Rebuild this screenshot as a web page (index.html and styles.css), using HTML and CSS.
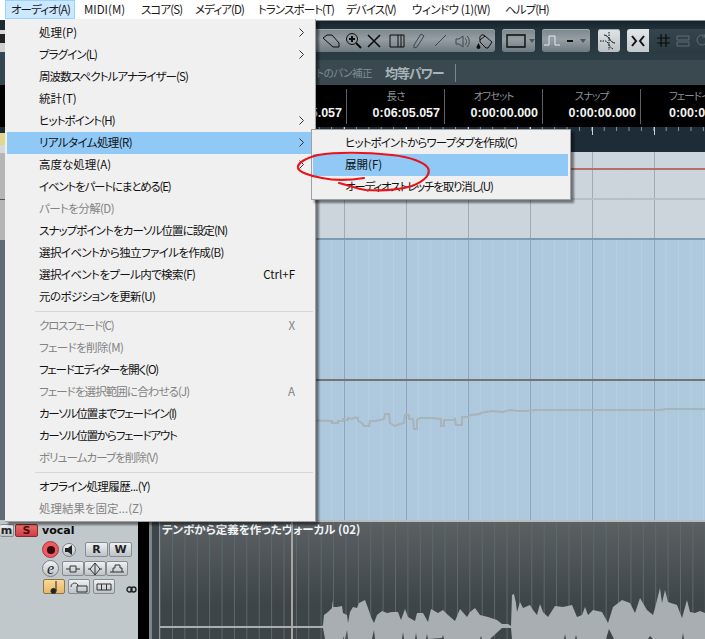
FILE: index.html
```html
<!doctype html>
<html lang="ja">
<head>
    <meta charset="UTF-8">
    <title>オーディオ メニュー</title>
    <link rel="stylesheet" href="styles.css">
</head>
<body>
<div class="app">
    <div class="menubar">
        <span class="top-item active">オーディオ(A)</span>
        <span class="top-item k">MIDI(M)</span>
        <span class="top-item">スコア(S)</span>
        <span class="top-item">メディア(D)</span>
        <span class="top-item">トランスポート(T)</span>
        <span class="top-item">デバイス(V)</span>
        <span class="top-item m">ウィンドウ (1)(W)</span>
        <span class="top-item">ヘルプ(H)</span>
    </div>

    <div class="upper">
        <!-- 左端に少しだけ見えている部分 -->
        <div class="strip">
            <div class="s1"></div>
            <div class="s2"></div>
            <div class="s3"></div>
            <div class="s4"></div>
            <div class="s5"></div>
            <div class="s6"></div>
            <div class="s7"></div>
            <div class="s8"></div>
            <div class="s9"></div>
        </div>

        <div class="main">
            <div class="toolbar">
                <div class="tool-group tools">
                    <svg class="tool" width="18" height="16" viewBox="0 0 18 16"><path d="M1 5 5 2h5l7 8v4h-6L1 5Z"/></svg>
                    <svg class="tool" width="17" height="17" viewBox="0 0 17 17"><circle cx="7" cy="7" r="5.5"/><path d="M4 7h6M7 4v6M11 11l5 5" stroke-width="2"/></svg>
                    <svg class="tool" width="14" height="14" viewBox="0 0 14 14"><path d="M1 1 13 13M13 1 1 13" stroke-width="1.6"/></svg>
                    <svg class="tool" width="16" height="14" viewBox="0 0 16 14"><path d="M1 1h14M1 13h14M1 1v12M9 1v12M12 1v12M15 1v12"/></svg>
                    <svg class="tool dim" width="12" height="17" viewBox="0 0 12 17"><path d="M1 13 8 2l3 2-7 11-3 1v-3Z"/></svg>
                    <svg class="tool dim" width="13" height="13" viewBox="0 0 13 13"><path d="M1 12 12 1"/></svg>
                    <svg class="tool dim" width="16" height="14" viewBox="0 0 16 14"><path d="M1 5h3l4-3v11L4 10H1V5ZM10 4c2 2 2 5 0 7M12 2c3 3 3 8 0 11"/></svg>
                    <svg class="tool" width="17" height="16" viewBox="0 0 17 16"><path d="M4 7 9 3l7 6-4 6H10L4 9V7ZM4 7C3 3 6 0 9 3"/><path class="ink" d="M2.500 10 4.500 14a2 2 0 1 1-4 0Z"/></svg>
                </div>
                <div class="tool-group shape">
                    <svg class="tool" width="20" height="14" viewBox="0 0 20 14"><path d="M1 1h18v12H1z" stroke-width="1.4"/></svg>
                    <span class="drop"></span>
                </div>
                <div class="tool-group pulse">
                    <svg class="tool pale" width="16" height="12" viewBox="0 0 16 12"><path d="M0 10h5V1h6v9h5"/></svg>
                    <span class="dash"></span>
                    <span class="drop"></span>
                </div>
                <div class="tool-group curve">
                    <svg class="tool" width="18" height="18" viewBox="0 0 18 18"><path d="M0 9h5c4 0 4 8 9 8M9 0v18" stroke-dasharray="1.5 1"/><path d="M4 3c5 0 6 8 11 8" /></svg>
                </div>
                <div class="tool-group snap">
                    <div class="snap-on">
                        <svg class="tool" width="14" height="14" viewBox="0 0 14 14"><path d="M1 2l4 5-4 5M13 2 9 7l4 5" stroke-width="2"/></svg>
                    </div>
                    <svg class="tool" width="13" height="13" viewBox="0 0 13 13"><path d="M4 0v13M9 0v13M0 4h13M0 9h13" stroke-width="1.2"/></svg>
                    <svg class="tool faded" width="14" height="12" viewBox="0 0 14 12"><path d="M1 1h12v4H1zM1 7h12v4H1z"/></svg>
                    <svg class="tool faded" width="12" height="13" viewBox="0 0 12 13"><path d="M11 6a5 5 0 1 1-2-4M9 0v3H6"/></svg>
                </div>
            </div>

            <div class="info-head">
                <span class="pan-label">プロジェクトのパン補正</span>
                <span class="pan-value">均等パワー</span>
                <span class="pan-sep"></span>
            </div>

            <div class="info-line">
                <div class="cell first"><span class="cell-label">開始</span><b>0:00:05.057</b></div>
                <div class="cell"><span class="cell-label">長さ</span><b>0:06:05.057</b></div>
                <div class="cell"><span class="cell-label">オフセット</span><b>0:00:00.000</b></div>
                <div class="cell"><span class="cell-label">スナップ</span><b>0:00:00.000</b></div>
                <div class="cell fade"><span class="cell-label">フェードイン</span><b>0:00:00.000</b></div>
            </div>

            <div class="ruler"></div>

            <div class="lane-top">
                <div class="red-line"></div>
                <div class="pale-line"></div>
            </div>

            <div class="lane-blue">
                <div class="center-line"></div>
                <svg class="volume" width="700" height="278" viewBox="5 240 700 278">
                    <polyline points="316,422.5 332,423 332,425 338,425 338,423 343,423 343,421 348,422 348,420 352,421 354,419.5 358,420 358,423 362,425 364,428 369,428 370,423 375,423 380,422 384,421 385,416 389,416 390,425 395,428 400,426 404,425 405,417 409,417 409,421 413,421 414,431 417,431 417,422 420,420 431,420 441,421 441,428 444,428 444,422 454,422 455,421 456,427 462,427 462,419 468,419 470,417 480,416 480,415 492,413 503,414 510,412 518,413 526,413 535,412 660,412 667,411 705,411"/>
                </svg>
            </div>
        </div>
    </div>

    <div class="lower">
        <div class="track-head">
            <div class="head-row name-row">
                <span class="btn btn-m">m</span>
                <span class="btn btn-s">S</span>
                <b class="track-name">vocal</b>
            </div>
            <div class="head-row row-rec">
                <span class="round rec"><i></i></span>
                <span class="round mon">
                    <svg width="10" height="12" viewBox="0 0 10 12"><path d="M1 4h3l4-3v10L4 8H1V4Z" fill="#222"/></svg>
                </span>
                <span class="btn btn-rw">R</span>
                <span class="btn btn-rw">W</span>
            </div>
            <div class="head-row row-edit">
                <span class="round edit">e</span>
                <span class="btn btn-small"><svg width="14" height="8" viewBox="0 0 14 8"><path d="M0 4h4M10 4h4M4 1h6v6H4z"/></svg></span>
                <span class="btn btn-small"><svg width="14" height="14" viewBox="0 0 14 14"><path d="M7 1 12 7 7 13 2 7ZM7 1v12M0 7h2M12 7h2"/></svg></span>
                <span class="btn btn-small"><svg width="14" height="9" viewBox="0 0 14 9"><path d="M0 8h14M3 8V4h2V1h5v3h2v4"/></svg></span>
            </div>
            <div class="head-row row-time">
                <span class="btn btn-note"><svg width="10" height="14" viewBox="0 0 10 14"><path d="M7 1v10" stroke="#222" fill="none"/><circle cx="4.5" cy="11" r="2.6" fill="#222"/></svg></span>
                <span class="btn btn-wide"><svg width="18" height="12" viewBox="0 0 18 12"><path d="M1 6C1 1 8 1 8 5M7 5h10v6H7z"/></svg></span>
                <span class="btn btn-wide"><svg width="16" height="8" viewBox="0 0 16 8"><path d="M1 1h14v6H1zM5.500 1v6M10.500 1v6"/></svg></span>
                <svg class="link" width="11" height="7" viewBox="0 0 11 7"><circle cx="3.500" cy="3.500" r="2.500"/><circle cx="7.500" cy="3.500" r="2.500"/></svg>
            </div>
        </div>
        <div class="head-gap"></div>
        <div class="head-edge"></div>
        <div class="head-dark"></div>
        <div class="track">
            <div class="track-title">テンポから定義を作ったヴォーカル (02)</div>
            <div class="cursor"></div>
            <div class="track-line"></div>
            <svg class="wave" width="546" height="119" viewBox="159 520 546 119">
                <polygon points="160,626 322,626 323,625 324,615 328,612 332,608 332,600 333,607 337,607 342,606 343,613 347,615 348,623 350,612 353,607 357,608 359,603 365,600 368,608 371,617 374,623 377,615 382,611 387,613 392,612 398,612 401,620 405,609 408,617 415,621 417,613 423,613 428,622 431,609 438,613 443,610 448,615 455,621 460,609 467,617 470,612 475,608 480,615 488,617 497,620 502,624 508,624 511,626 512,595 514,594 516,603 517,612 520,602 523,608 530,605 533,610 537,615 540,604 543,612 548,617 555,606 563,607 572,605 577,617 582,615 585,607 588,615 593,610 602,612 608,623 613,607 622,600 630,603 635,613 640,598 647,610 653,615 655,608 660,588 662,603 665,590 668,602 677,605 682,618 687,600 690,612 695,613 700,611 705,613 705,639 684,639 683,633 682,639 653,639 650,636 648,639 614,639 609,629 606,639 577,639 576,635 575,639 566,639 565,634 564,639 512,639 511,628 502,628 490,639 482,639 481,636 480,639 444,639 443,635 442,638 428,639 427,634 426,639 417,639 416,633 415,639 404,639 403,632 402,639 375,639 374,630 372,639 348,639 347,630 345,639 344,639 343,636 343,639 325,639 323,628 160,628"/>
            </svg>
        </div>
    </div>

    <div class="menu main-menu">
        <div class="item sub k">処理(P)<svg class="arrow" width="5" height="9" viewBox="0 0 5 9"><path d="M.5.500 4.500 4.500.5 8.500"/></svg></div>
        <div class="item sub">プラグイン(L)<svg class="arrow" width="5" height="9" viewBox="0 0 5 9"><path d="M.5.500 4.500 4.500.5 8.500"/></svg></div>
        <div class="item">周波数スペクトルアナライザー(S)</div>
        <div class="item k">統計(T)</div>
        <div class="item sub">ヒットポイント(H)<svg class="arrow" width="5" height="9" viewBox="0 0 5 9"><path d="M.5.500 4.500 4.500.5 8.500"/></svg></div>
        <div class="item sub selected m">リアルタイム処理(R)<svg class="arrow" width="5" height="9" viewBox="0 0 5 9"><path d="M.5.500 4.500 4.500.5 8.500"/></svg></div>
        <div class="item sub k">高度な処理(A)<svg class="arrow" width="5" height="9" viewBox="0 0 5 9"><path d="M.5.500 4.500 4.500.5 8.500"/></svg></div>
        <div class="item t">イベントをパートにまとめる(E)</div>
        <div class="item off m">パートを分解(D)</div>
        <div class="item">スナップポイントをカーソル位置に設定(N)</div>
        <div class="item m">選択イベントから独立ファイルを作成(B)</div>
        <div class="item m">選択イベントをプール内で検索(F)<span class="key">Ctrl+F</span></div>
        <div class="item m">元のポジションを更新(U)</div>
        <div class="sep"></div>
        <div class="item off t">クロスフェード(C)<span class="key">X</span></div>
        <div class="item off m">フェードを削除(M)</div>
        <div class="item t">フェードエディターを開く(O)</div>
        <div class="item off">フェードを選択範囲に合わせる(J)<span class="key">A</span></div>
        <div class="item t">カーソル位置までフェードイン(I)</div>
        <div class="item t">カーソル位置からフェードアウト</div>
        <div class="item off">ボリュームカーブを削除(V)</div>
        <div class="sep"></div>
        <div class="item m">オフライン処理履歴...(Y)</div>
        <div class="item off k">処理結果を固定...(Z)</div>
    </div>

    <div class="menu sub-menu">
        <div class="item">ヒットポイントからワープタブを作成(C)</div>
        <div class="item selected k">展開(F)</div>
        <div class="item t">オーディオストレッチを取り消し(U)</div>
    </div>

    <!-- 赤い手書きの丸 -->
    <svg class="scribble" width="705" height="639" viewBox="0 0 705 639">
        <path d="M364 178C352 180 336 181 322 178 310 176 299 172 298 168 297 163 306 158 318 155 335 152 365 152 392 155 410 157 424 162 428 168 431 174 425 181 412 186 398 190 380 191 366 190 357 189 348 185 339 183"/>
    </svg>
</div>
</body>
</html>
```

FILE: styles.css
```css
*{
    box-sizing: border-box;
}
body{
    margin: 0;
    background: #000;
    font-family: "Noto Sans CJK JP", "Liberation Sans", sans-serif;
    font-size: 11.5px;
    font-feature-settings: "palt";
}
.app{
    position: relative;
    width: 705px;
    height: 639px;
    overflow: hidden;
}

/* menu bar */
.menubar{
    display: grid;
    grid-template-columns: 73px 57px 54px 63px 88px 66px 93px 80px;
    padding-left: 5px;
    height: 20px;
    background: #fff;
    color: #1a1a1a;
}
.top-item{
    padding-left: 6px;
    line-height: 19px;
    white-space: nowrap;
    letter-spacing: -.9px;
}
.top-item.k{
    letter-spacing: 0;
}
.top-item.m{
    letter-spacing: -.45px;
}
.top-item.active{
    width: 70px;
    height: 19px;
    background: #cce8ff;
    box-shadow: inset 0 0 0 1px #99d1ff;
}

/* left edge */
.upper{
    display: flex;
    height: 500px;
}
.strip{
    width: 5px;
    display: flex;
    flex-direction: column;
}
.s1{ height: 10px; background: #1c2a32; }
.s2{ height: 22px; background: linear-gradient(#d8d8d8 0 20%, #222 20% 60%, #d0d0d0 60%); }
.s3{ height: 33px; background: #34464f; }
.s4{ height: 42px; background: #000; }
.s5{ height: 6px; background: #1c2c36; }
.s6{ height: 12px; background: #e4d68c; }
.s7{ height: 8px; background: #d8d8d8; }
.s8{ height: 87px; background: linear-gradient(#b5b5b5 0 53%, #555 53% 54%, #b5b5b5 54%); }
.s9{ flex: 1; background: #5e6c74; }
.main{
    flex: 1;
    min-width: 0;
    display: flex;
    flex-direction: column;
}

/* toolbar */
.toolbar{
    height: 40px;
    display: flex;
    align-items: flex-start;
    padding: 8px 0 0 245px;
    background: linear-gradient(#15232c, #26343c 25%, #2c3d45);
    border-top: 1px solid #8a8f92;
}
.tool-group{
    height: 23px;
    display: flex;
    align-items: center;
    border-radius: 3px;
    background: linear-gradient(#7b868c, #949ea3 45%, #6f7a80);
    box-shadow: inset 0 1px 0 #a3acb1;
    flex: none;
}
.tool{
    fill: none;
    stroke: #0d0d0d;
    stroke-width: 1;
    flex: none;
}
.tool .ink{
    fill: #0d0d0d;
    stroke: none;
}
.tool.dim{ stroke: #3e464b; }
.tool.pale{ stroke: #e6ebee; }
.tool.faded{ stroke: #56646b; }
.tools{
    width: 245px;
    padding-left: 72px;
}
.tools svg:nth-child(1){ margin-right: 5px; }
.tools svg:nth-child(2){ margin-right: 5px; }
.tools svg:nth-child(3){ margin-right: 8px; }
.tools svg:nth-child(4){ margin-right: 8px; }
.tools svg:nth-child(5){ margin-right: 9px; }
.tools svg:nth-child(6){ margin-right: 8px; }
.tools svg:nth-child(7){ margin-right: 5px; }
.shape{
    width: 33px;
    margin-left: 7px;
    padding-left: 4px;
    gap: 3px;
}
.drop{
    width: 0;
    height: 0;
    border: 3.5px solid transparent;
    border-top: 4px solid #4c565c;
    border-bottom: 0;
}
.pulse{
    width: 48px;
    margin-left: 7px;
    padding-left: 2px;
}
.dash{
    width: 6px;
    height: 2px;
    background: #111;
    margin: 0 7px 0 7px;
}
.curve{
    width: 22px;
    margin-left: 8px;
    justify-content: center;
    background: linear-gradient(#e0e5e8, #b9c1c6);
}
.snap{
    flex: 1;
    margin-left: 7px;
    border-radius: 3px 0 0 3px;
    background: linear-gradient(#36454d, #2c3a42);
    box-shadow: none;
}
.snap-on{
    width: 22px;
    height: 23px;
    display: flex;
    align-items: center;
    justify-content: center;
    background: linear-gradient(#e2e7ea, #c3cace);
    border-radius: 3px 0 0 3px;
    margin-right: 8px;
}
.snap .tool{
    stroke: #0b0b0b;
}
.snap-on .tool{
    stroke: #111;
}
.snap .tool.faded{
    stroke: #5e6d75;
    margin-left: 6px;
}

/* pan row */
.info-head{
    height: 25px;
    display: flex;
    align-items: center;
    background: #3a4950;
}
.pan-label{
    width: 367px;
    text-align: right;
    font-size: 10.5px;
    letter-spacing: -.5px;
    color: #7f8c92;
    white-space: nowrap;
}
.pan-value{
    margin-left: 13px;
    font-size: 13px;
    letter-spacing: -1px;
    font-weight: bold;
    color: #a9b4b9;
    white-space: nowrap;
}
.pan-sep{
    width: 1px;
    height: 18px;
    margin-left: 11px;
    background: #7a878d;
}

/* info line */
.info-line{
    height: 42px;
    display: flex;
    padding: 4px 0 0 244px;
    background: #000;
    overflow: hidden;
}
.cell{
    flex: none;
    width: 98px;
    height: 35px;
    border-right: 1px solid #5c6165;
    text-align: center;
}
.cell-label{
    display: block;
    height: 17px;
    line-height: 14px;
    font-size: 10.5px;
    letter-spacing: -1px;
    color: #8d9297;
}
.cell b{
    display: block;
    padding-right: 4px;
    text-align: right;
    font-family: "Liberation Sans", sans-serif;
    font-size: 12.5px;
    line-height: 15px;
    color: #f4f4f4;
}
.cell.fade{
    width: 100px;
    border-right: 0;
    text-align: left;
    padding-left: 28px;
    white-space: nowrap;
}
.cell.fade b{
    text-align: left;
    padding: 0;
}

/* ruler */
.ruler{
    height: 25px;
    background:
        linear-gradient(90deg, #c9d2d8 1px, transparent 1px) 29px 0 / 62px 8px repeat-x,
        linear-gradient(90deg, #8e9aa2 1px, transparent 1px) 4px 0 / 12.4px 4px repeat-x,
        #1d2c37;
}

/* lanes */
.lane-top{
    height: 86px;
    position: relative;
    background:
        linear-gradient(90deg, #a0abb5 1px, transparent 1px) 29px 0 / 62px 100%,
        linear-gradient(90deg, #c8d5e0 1px, transparent 1px) 4px 0 / 12.4px 100%,
        #ccd4dc;
}
.red-line{
    position: absolute;
    left: 300px;
    right: 0;
    top: 16px;
    height: 2px;
    background: #b96c6c;
}
.pale-line{
    position: absolute;
    left: 300px;
    right: 0;
    top: 46px;
    height: 2px;
    background: #b5c0ca;
}
.lane-blue{
    flex: 1;
    position: relative;
    border-top: 2px solid #7d9ab3;
    background:
        linear-gradient(90deg, #8ca5bb 1px, transparent 1px) 29px 0 / 62px 100%,
        linear-gradient(90deg, #b5cfe3 1px, transparent 1px) 4px 0 / 12.4px 100%,
        #aec8dd;
}
.center-line{
    position: absolute;
    left: 0;
    right: 0;
    top: 139px;
    height: 2px;
    background: #747474;
}
.volume{
    position: absolute;
    left: 0;
    top: -2px;
}
.volume polyline{
    fill: none;
    stroke: #a9b3ba;
    stroke-width: 2;
}

/* bottom */
.lower{
    height: 119px;
    display: flex;
}
.track-head{
    width: 138px;
    background: #c1c8cc;
    padding-top: 4px;
}
.head-row{
    display: flex;
    align-items: center;
}
.name-row{
    height: 12px;
    margin-bottom: 5px;
}
.btn{
    display: flex;
    align-items: center;
    justify-content: center;
    flex: none;
    height: 15px;
    border: 1px solid #868c90;
    border-radius: 2px;
    background: linear-gradient(#eef1f2, #bcc2c6);
    color: #222;
    font-family: "DejaVu Sans", sans-serif;
    font-size: 11px;
    font-weight: bold;
}
.btn svg{
    fill: none;
    stroke: #333;
}
.btn-m{
    width: 14px;
    height: 13px;
    border-left: 0;
}
.btn-s{
    width: 23px;
    height: 13px;
    margin-left: 1px;
    background: linear-gradient(#ea6a6a, #cf3f43);
    border-color: #7e2f30;
    color: #4a0f10;
}
.track-name{
    margin-left: 4px;
    font-family: "DejaVu Sans", sans-serif;
    font-size: 11px;
    color: #0c0c0c;
}
.row-rec{
    height: 17px;
    margin-bottom: 2px;
    padding-left: 42px;
}
.round{
    flex: none;
    display: flex;
    align-items: center;
    justify-content: center;
    border-radius: 50%;
    border: 1px solid #7b8185;
    background: linear-gradient(#f0f2f3, #bcc2c6);
}
.rec{
    width: 17px;
    height: 17px;
    background: #ec5a62;
    border-color: #a53a40;
}
.rec i{
    width: 8px;
    height: 8px;
    border-radius: 50%;
    background: #3a0a0c;
}
.mon{
    width: 14px;
    height: 14px;
    margin-left: 3px;
}
.btn-rw{
    width: 23px;
    height: 15px;
}
.mon + .btn-rw{
    margin-left: 9px;
}
.row-rec .btn-rw + .btn-rw{
    margin-left: 1px;
}
.row-edit{
    height: 17px;
    margin-bottom: 2px;
    padding-left: 42px;
}
.edit{
    width: 17px;
    height: 17px;
    font-family: "Liberation Serif", serif;
    font-style: italic;
    font-size: 16px;
    line-height: 14px;
    color: #1a1a1a;
}
.btn-small{
    width: 22px;
    height: 15px;
}
.edit + .btn-small{
    margin-left: 3px;
}
.row-time{
    height: 15px;
    padding-left: 43px;
}
.btn-note{
    width: 22px;
    background: linear-gradient(#f7d89c, #e8b866);
    border-color: #8f7444;
}
.btn-wide{
    width: 22px;
    margin-left: 3px;
}
.link{
    margin-left: 11px;
    margin-top: 6px;
    fill: none;
    stroke: #222;
    stroke-width: 1.4;
}
.head-gap{
    width: 11px;
    background: #000;
}
.head-edge{
    width: 3px;
    background: #80878a;
}
.head-dark{
    width: 7px;
    background: #3d464b;
}
.track{
    flex: 1;
    position: relative;
    border-top: 2px solid #b8bcc0;
    background:
        linear-gradient(90deg, #5d696d 1px, transparent 1px) 12px 0 / 12.4px 100%,
        linear-gradient(#5b6063, #3e4548 70%);
    border-left: 1px solid #8d9396;
}
.track-title{
    padding: 0 0 0 2px;
    line-height: 14px;
    font-size: 11.5px;
    font-weight: bold;
    color: #f2f5f7;
    white-space: nowrap;
}
.cursor{
    position: absolute;
    left: 131px;
    top: 0;
    bottom: 0;
    width: 2px;
    background: #a8a4a0;
}
.track-line{
    position: absolute;
    left: 0;
    right: 0;
    top: 104px;
    height: 1px;
    background: #a9aeb1;
}
.wave{
    position: absolute;
    left: -1px;
    top: -2px;
}
.wave polygon{
    fill: #a8aeb1;
}

/* popup menus */
.menu{
    position: absolute;
    background: #f0f0f0;
    border: 1px solid #a0a0a0;
    color: #111;
    box-shadow: 3px 3px 2px rgba(0, 0, 0, .45);
}
.main-menu{
    left: 5px;
    top: 19px;
    width: 311px;
    height: 503px;
    border-top: 0;
    border-left: 0;
    padding: 3px 0 0 2px;
}
.sub-menu{
    left: 311px;
    top: 129px;
    width: 260px;
    height: 71px;
    padding: 2px 2px 0 1px;
}
.item{
    display: flex;
    align-items: center;
    justify-content: space-between;
    height: 22px;
    padding: 0 20px 2px 32px;
    white-space: nowrap;
    letter-spacing: -.9px;
}
.item.k{
    letter-spacing: 0;
}
.item.m{
    letter-spacing: -.6px;
}
.item.t{
    letter-spacing: -1.2px;
}
.item.sub{
    padding-right: 11px;
}
.item.selected{
    background: #90c8f6;
}
.item.off{
    color: #838383;
}
.key{
    letter-spacing: 0;
}
.arrow{
    fill: none;
    stroke: #333;
    stroke-width: 1;
}
.sep{
    height: 1px;
    margin: 3px 2px 3px 28px;
    background: #d7d7d7;
}
.scribble{
    position: absolute;
    left: 0;
    top: 0;
    pointer-events: none;
}
.scribble path{
    fill: none;
    stroke: #e8141c;
    stroke-width: 2.2;
    stroke-linecap: round;
}
```
